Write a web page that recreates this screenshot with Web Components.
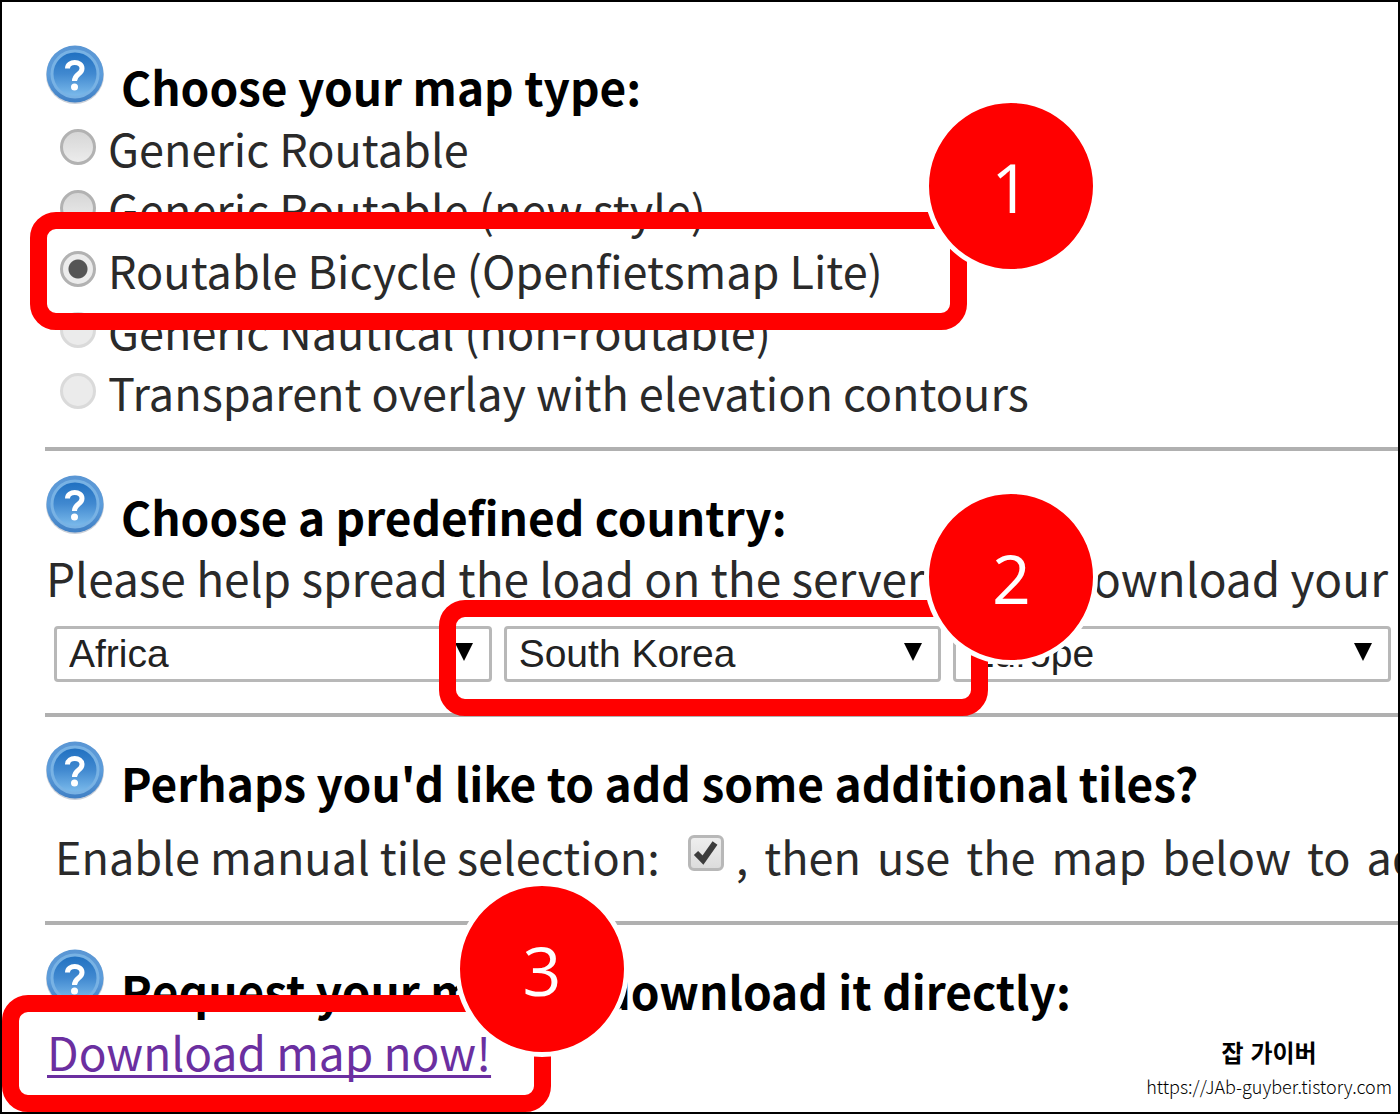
<!DOCTYPE html>
<html lang="en">
<head>
<meta charset="utf-8">
<title>Download map</title>
<style>
  body {
    margin: 0;
    background: #fff;
    color: #2a2a2a;
    font-family: "Noto Sans CJK KR", "Open Sans", sans-serif;
    font-size: 45px;
    line-height: 61px;
  }
</style>
</head>
<body>
<map-page></map-page>

<script>
class HelpIcon extends HTMLElement {
  constructor() {
    super()
    this.attachShadow({ mode: "open" })
  }

  connectedCallback() {
    this.shadowRoot.innerHTML = `
      <style>
        :host {
          display: block;
          flex: none;
          height: 60px;
          width: 60px;
        }
        svg {
          display: block;
        }
      </style>
      <svg width="60" height="60" viewBox="0 0 60 60" aria-hidden="true">
        <defs>
          <linearGradient id="rim" x1="0" y1="0" x2="0" y2="1">
            <stop offset="0" stop-color="#5a96d4"/>
            <stop offset=".5" stop-color="#5d9ddb"/>
            <stop offset="1" stop-color="#3f7fc4"/>
          </linearGradient>
          <linearGradient id="face" x1="0" y1="0" x2="0" y2="1">
            <stop offset="0" stop-color="#1e6fc0"/>
            <stop offset=".5" stop-color="#4189d0"/>
            <stop offset="1" stop-color="#7dbcec"/>
          </linearGradient>
        </defs>
        <circle cx="30" cy="30" r="29" fill="#c9cfd8"/>
        <circle cx="30" cy="29" r="28.5" fill="url(#rim)"/>
        <circle cx="30" cy="29" r="23" fill="url(#face)" stroke="#78b2e4" stroke-width="3"/>
        <path d="M22.500 23.500C22.500 15.500 37 15.500 37 23.500C37 29.500 29.500 28.500 29.500 36" fill="none" stroke="#fff" stroke-width="5"/>
        <circle cx="29.500" cy="42" r="3.500" fill="#fff"/>
      </svg>
    `
  }
}
window.customElements.define("help-icon", HelpIcon)

class MapSection extends HTMLElement {
  constructor() {
    super()
    this.attachShadow({ mode: "open" })
  }

  connectedCallback() {
    this.shadowRoot.innerHTML = `
      <style>
        :host {
          display: block;
        }
        :host([ruled]) {
          border-top: 4px solid #b0b0b0;
          padding-top: 24px;
        }
        header {
          align-items: flex-start;
          display: flex;
          gap: 16px;
        }
        h2 {
          color: #000;
          font-size: 46px;
          font-weight: 700;
          line-height: 61px;
          margin: 0;
          padding-top: 11px;
          white-space: nowrap;
        }
      </style>
      <section>
        <header>
          <help-icon></help-icon>
          <h2><slot name="title"></slot></h2>
        </header>
        <slot></slot>
      </section>
    `
  }
}
window.customElements.define("map-section", MapSection)

// Red numbered frame drawn round whatever is slotted in
class StepCallout extends HTMLElement {
  constructor() {
    super()
    this.attachShadow({ mode: "open" })
  }

  connectedCallback() {
    this.shadowRoot.innerHTML = `
      <style>
        :host {
          display: block;
          position: relative;
        }
        .frame {
          border: 17px solid #f00;
          border-radius: 26px;
          inset: var(--frame-inset, -20px);
          pointer-events: none;
          position: absolute;
          z-index: 1;
        }
        .badge {
          align-items: center;
          background: #f00;
          border: 5px solid #fff;
          border-radius: 50%;
          box-sizing: border-box;
          color: #fff;
          display: flex;
          font-family: "Open Sans", sans-serif;
          font-size: 68px;
          height: 176px;
          justify-content: center;
          position: absolute;
          right: var(--badge-right, -148px);
          top: var(--badge-top, -131px);
          width: 174px;
        }
      </style>
      <slot></slot>
      <div class="frame"><span class="badge">${this.getAttribute("step")}</span></div>
    `
  }
}
window.customElements.define("step-callout", StepCallout)

class MapTypeList extends HTMLElement {
  constructor() {
    super()
    this.attachShadow({ mode: "open" })
  }

  connectedCallback() {
    this.shadowRoot.innerHTML = `
      <style>
        :host {
          align-items: flex-start;
          display: flex;
          flex-direction: column;
          padding: 0 0 25px 15px;
        }
        label {
          align-items: center;
          display: flex;
          gap: 12px;
          white-space: nowrap;
        }
        input {
          appearance: none;
          background: linear-gradient(#d6d6d6, #ececec);
          border: 3px solid #b2b2b2;
          border-radius: 50%;
          flex: none;
          height: 36px;
          margin: 0 0 2px;
          width: 36px;
        }
        input:checked {
          background: radial-gradient(circle, #555 0 9px, #ececec 10px);
        }
        input:disabled {
          background: #ebebeb;
          border-color: #dadada;
        }
        step-callout {
          --frame-inset: -27px -84px -30px -30px;
        }
      </style>
      <label><input type="radio" name="type">Generic Routable</label>
      <label><input type="radio" name="type">Generic Routable (new style)</label>
      <step-callout step="1">
        <label><input type="radio" name="type" checked>Routable Bicycle (Openfietsmap Lite)</label>
      </step-callout>
      <label><input type="radio" name="type" disabled>Generic Nautical (non-routable)</label>
      <label><input type="radio" name="type" disabled>Transparent overlay with elevation contours</label>
    `
  }
}
window.customElements.define("map-type-list", MapTypeList)

class RegionSelect extends HTMLElement {
  constructor() {
    super()
    this.attachShadow({ mode: "open" })
  }

  connectedCallback() {
    this.shadowRoot.innerHTML = `
      <style>
        :host {
          display: grid;
        }
        select, svg {
          grid-area: 1 / 1;
        }
        select {
          appearance: none;
          background: #fff;
          border: 3px solid #b8b8b8;
          border-radius: 4px;
          color: #222;
          font-family: "Liberation Sans", sans-serif;
          font-size: 39px;
          height: 56px;
          line-height: 48px;
          padding: 0 12px;
          width: 100%;
        }
        svg {
          align-self: center;
          justify-self: end;
          margin: 0 18px 4px 0;
          pointer-events: none;
        }
      </style>
      <select aria-label="${this.getAttribute("label")}">
        <option>${this.getAttribute("value")}</option>
      </select>
      <svg width="20" height="20" viewBox="0 0 20 20" aria-hidden="true"><path d="M1 1H19L10 19Z"/></svg>
    `
  }
}
window.customElements.define("region-select", RegionSelect)

class TileToggle extends HTMLElement {
  constructor() {
    super()
    this.attachShadow({ mode: "open" })
  }

  connectedCallback() {
    this.shadowRoot.innerHTML = `
      <style>
        :host {
          align-items: center;
          display: flex;
          padding: 12px 0 35px 10px;
          white-space: nowrap;
        }
        .box {
          display: grid;
          margin: 0 12px 6px 28px;
        }
        input, svg {
          grid-area: 1 / 1;
        }
        input {
          appearance: none;
          background: linear-gradient(#eee, #dcdcdc);
          border: 3px solid #b8b8b8;
          border-radius: 6px;
          height: 36px;
          margin: 0;
          width: 36px;
        }
        svg {
          pointer-events: none;
        }
        .hint {
          display: flex;
          gap: 16px;
        }
      </style>
      <label for="manual">Enable manual tile selection:</label>
      <span class="box">
        <input type="checkbox" id="manual" checked>
        <svg width="36" height="36" viewBox="0 0 36 36" aria-hidden="true"><path d="M8 18L15 25L27 8" fill="none" stroke="#3c3c3c" stroke-width="6"/></svg>
      </span>
      <span class="hint">
        <span>,</span>
        <span>then</span>
        <span>use</span>
        <span>the</span>
        <span>map</span>
        <span>below</span>
        <span>to</span>
        <span>add</span>
      </span>
    `
  }
}
window.customElements.define("tile-toggle", TileToggle)

class SiteCredit extends HTMLElement {
  constructor() {
    super()
    this.attachShadow({ mode: "open" })
  }

  connectedCallback() {
    this.shadowRoot.innerHTML = `
      <style>
        :host {
          color: #000;
          display: block;
          font-size: 18px;
          font-weight: 300;
          line-height: 34px;
          text-align: center;
        }
        strong {
          display: block;
          font-size: 24px;
          font-weight: 700;
        }
      </style>
      <strong lang="ko">잡 가이버</strong>
      <span>https://JAb-guyber.tistory.com</span>
    `
  }
}
window.customElements.define("site-credit", SiteCredit)

class MapPage extends HTMLElement {
  constructor() {
    super()
    this.attachShadow({ mode: "open" })
  }

  connectedCallback() {
    this.shadowRoot.innerHTML = `
      <style>
        :host {
          border: 2px solid #000;
          box-sizing: border-box;
          display: block;
          min-height: 100vh;
          overflow: hidden;
          padding: 43px 0 30px 43px;
          position: relative;
        }
        p {
          display: flex;
          font-size: 46px;
          justify-content: space-between;
          margin: 0;
          padding: 0 10px 0 1px;
          white-space: nowrap;
        }
        .regions {
          display: grid;
          gap: 12px;
          grid-template-columns: repeat(3, 1fr);
          padding: 18px 7px 31px 9px;
        }
        .regions step-callout {
          --badge-right: -127px;
          --badge-top: -128px;
          --frame-inset: -26px -47px -34px -65px;
        }
        .download {
          --badge-right: -95px;
          --frame-inset: -26px -60px -30px -45px;
          font-size: 46px;
          margin-left: 2px;
          width: fit-content;
        }
        a {
          color: #6b2fa0;
          text-decoration-skip-ink: none;
          text-decoration-thickness: 3px;
          text-underline-offset: 4px;
        }
        site-credit {
          bottom: 9px;
          position: absolute;
          right: 6px;
        }
      </style>
      <main>
        <map-section>
          <span slot="title">Choose your map type:</span>
          <map-type-list></map-type-list>
        </map-section>
        <map-section ruled>
          <span slot="title">Choose a predefined country:</span>
          <p>
            <span>Please help spread the load on the servers</span>
            <span>and download your</span>
          </p>
          <div class="regions">
            <region-select label="Africa" value="Africa"></region-select>
            <step-callout step="2">
              <region-select label="Asia" value="South Korea"></region-select>
            </step-callout>
            <region-select label="Europe" value="Europe"></region-select>
          </div>
        </map-section>
        <map-section ruled>
          <span slot="title">Perhaps you'd like to add some additional tiles?</span>
          <tile-toggle></tile-toggle>
        </map-section>
        <map-section ruled>
          <span slot="title">Request your map or download it directly:</span>
          <step-callout class="download" step="3"><a href="#">Download map now!</a></step-callout>
        </map-section>
      </main>
      <site-credit></site-credit>
    `
  }
}
window.customElements.define("map-page", MapPage)
</script>
</body>
</html>
